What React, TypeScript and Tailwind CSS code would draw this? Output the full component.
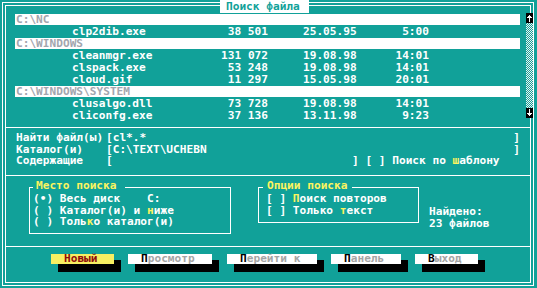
import type { ReactNode } from 'react'

interface FileItem {
  name: string
  size: string
  date: string
  time: string
}

const groups: { path: string; files: FileItem[] }[] = [
  { path: 'C:\\NC', files: [{ name: 'clp2dib.exe', size: '38 501', date: '25.05.95', time: '5:00' }] },
  {
    path: 'C:\\WINDOWS',
    files: [
      { name: 'cleanmgr.exe', size: '131 072', date: '19.08.98', time: '14:01' },
      { name: 'clspack.exe', size: '53 248', date: '19.08.98', time: '14:01' },
      { name: 'cloud.gif', size: '11 297', date: '15.05.98', time: '20:01' },
    ],
  },
  {
    path: 'C:\\WINDOWS\\SYSTEM',
    files: [
      { name: 'clusalgo.dll', size: '73 728', date: '19.08.98', time: '14:01' },
      { name: 'cliconfg.exe', size: '37 136', date: '13.11.98', time: '9:23' },
    ],
  },
]

// hotkey letter
function Y({ children }: { children: ReactNode }) {
  return <span className="text-[#fbf45f]">{children}</span>
}

function Button({ className, face, children }: { className: string; face: string; children: ReactNode }) {
  return (
    <div className={`relative h-[10px] shrink-0 ${className}`}>
      <div className="absolute left-[7px] top-[6px] w-full h-[12px] bg-black" />
      <div className={`relative h-full pl-[13px] leading-[10px] ${face}`}>{children}</div>
    </div>
  )
}

export default function App() {
  return (
    <div className="relative w-[537px] h-[288px] overflow-hidden bg-[#11a199] pt-[2px] pl-[2px] font-['DejaVu_Sans_Mono',monospace] text-[11.15px] font-bold text-white whitespace-pre">
      <div className="w-[532px] h-[284px] border border-white p-[2px]">
        <div className="h-full border border-white flex flex-col">

          {/* found files */}
          <div className="h-[122px] pt-[8px] border-b border-white">
            {groups.map((g) => (
              <div key={g.path}>
                <div className="h-[12px] pl-[9px]">
                  <div className="w-[505px] h-[11px] bg-white pl-[1px] leading-[11px] text-[#a3a6ae]">{g.path}</div>
                </div>
                {g.files.map((f) => (
                  <div key={f.name} className="flex h-[12px] leading-[12px]">
                    <span className="w-[66px] shrink-0" />
                    <span className="w-[100px] shrink-0">{f.name}</span>
                    <span className="w-[96px] shrink-0 text-right">{f.size}</span>
                    <span className="w-[35px] shrink-0" />
                    <span className="w-[58px] shrink-0">{f.date}</span>
                    <span className="w-[68px] shrink-0 text-right">{f.time}</span>
                  </div>
                ))}
              </div>
            ))}
          </div>

          {/* search fields */}
          <div className="h-[48px] pt-[4px] border-b border-white leading-[11.5px]">
            <div className="flex pl-[10px] pr-[10px]">
              <span className="w-[90px] shrink-0">Найти файл(ы)</span>
              <span>[cl*.*</span>
              <span className="ml-auto">]</span>
            </div>
            <div className="flex pl-[10px] pr-[10px]">
              <span className="w-[90px] shrink-0">Каталог(и)</span>
              <span>[C:\TEXT\UCHEBN</span>
              <span className="ml-auto">]</span>
            </div>
            <div className="flex pl-[10px] pr-[10px]">
              <span className="w-[90px] shrink-0">Содержащие</span>
              <span className="w-[246px] shrink-0">[</span>
              <span>] [ ] Поиск по <Y>ш</Y>аблону</span>
            </div>
          </div>

          {/* options */}
          <div className="h-[71px] border-b border-white flex items-start pt-[11px] leading-[11.5px]">
            <div className="relative ml-[23px] w-[202px] h-[47px] shrink-0 border border-white pt-[5px] pl-[3px]">
              <span className="absolute left-[3px] -top-[7px] pl-[3px] pr-[8px] bg-[#11a199] text-[#fbf45f] leading-[10px]">Место поиска</span>
              <div>(•) Весь диск    C:</div>
              <div>( ) Каталог(и) и <Y>н</Y>иже</div>
              <div>( ) Толь<Y>к</Y>о каталог(и)</div>
            </div>
            <div className="relative ml-[27px] w-[161px] h-[36px] shrink-0 border border-white pt-[5px] pl-[7px]">
              <span className="absolute left-[4px] -top-[7px] px-[4px] bg-[#11a199] text-[#fbf45f] leading-[10px]">Опции поиска</span>
              <div>[ ] <Y>П</Y>оиск повторов</div>
              <div>[ ] Только <Y>т</Y>екст</div>
            </div>
            <div className="ml-[10px] mt-[19px]">
              <div>Найдено:</div>
              <div>23 файлов</div>
            </div>
          </div>

          {/* buttons */}
          <div className="flex pt-[7px] pl-[45px]">
            <Button className="w-[63px]" face="bg-[#f7ef62] text-[#8e0c0c]">Новый</Button>
            <Button className="ml-[14px] w-[84px]" face="bg-white text-[#a4a4a4]">
              <span className="text-black">П</span>росмотр
            </Button>
            <Button className="ml-[15px] w-[90px]" face="bg-white text-[#a4a4a4]">
              <span className="text-black">П</span>ерейти к
            </Button>
            <Button className="ml-[14px] w-[70px]" face="bg-white text-[#a4a4a4]">
              <span className="text-black">П</span>анель
            </Button>
            <Button className="ml-[14px] w-[63px]" face="bg-white text-[#a4a4a4]">
              <span className="text-black">В</span>ыход
            </Button>
          </div>
        </div>
      </div>

      {/* dialog title over the frame */}
      <div className="absolute left-[220px] top-0 w-[89px] h-[13px] pt-[1px] pl-[6px] bg-white text-[#11a199] leading-[12px]">Поиск файла</div>

      {/* scroll bar over the right frame */}
      <div className="absolute left-[526px] top-[13px] w-[7px] h-[105px] flex flex-col">
        <div className="h-[10px] bg-black">
          <svg width="7" height="10" viewBox="0 0 7 10" fill="#fff">
            <rect x="3" y="2" width="1" height="7" />
            <rect x="2" y="3" width="3" height="1" />
            <rect x="1" y="4" width="5" height="1" />
          </svg>
        </div>
        <div className="flex-1 bg-[repeating-conic-gradient(#f2f2f2_0_25%,#11a199_0_50%)] bg-[length:2px_2px]" />
        <div className="h-[10px] bg-black">
          <svg width="7" height="10" viewBox="0 0 7 10" fill="#fff">
            <rect x="3" y="1" width="1" height="7" />
            <rect x="2" y="6" width="3" height="1" />
            <rect x="1" y="5" width="5" height="1" />
          </svg>
        </div>
      </div>
    </div>
  )
}
